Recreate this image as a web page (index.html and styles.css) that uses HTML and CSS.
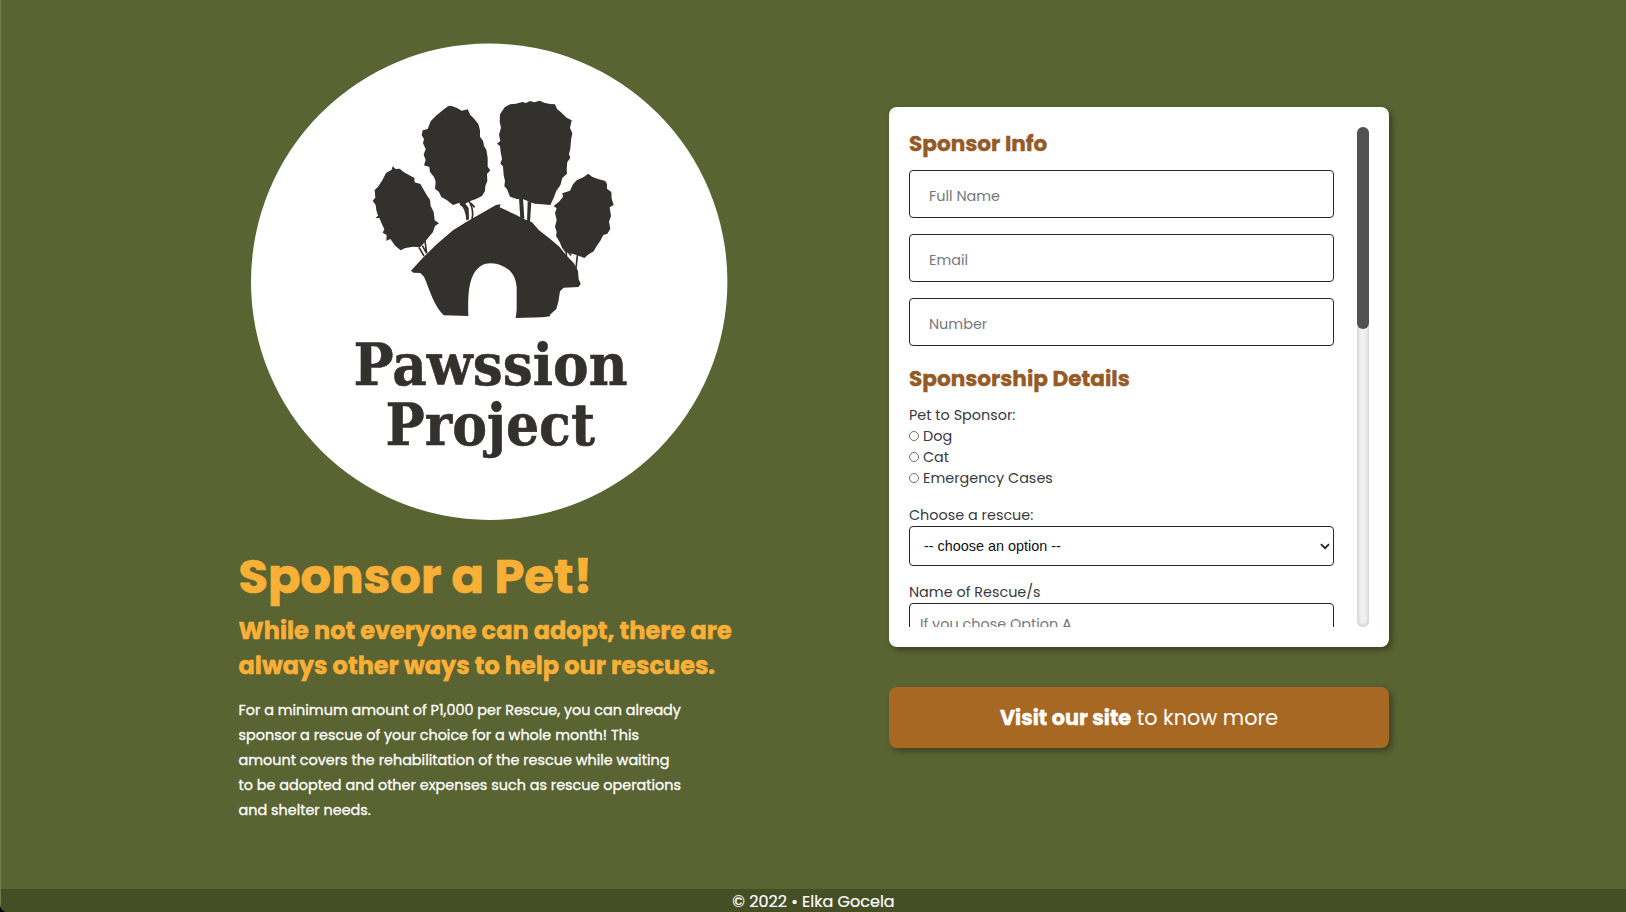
FILE: index.html
```html
<!DOCTYPE html>
<html lang="en">
<head>
<meta charset="utf-8">
<title>Pawssion Project – Sponsor a Pet</title>
<link rel="stylesheet" href="styles.css">
</head>
<body>
<div class="window">
<main class="page">
  <section class="intro">
    <svg class="logo" viewBox="250.5 43 477 477" role="img" aria-label="Pawssion Project">
      <circle cx="488.7" cy="281.7" r="238.2" fill="#fff"/>
      <g transform="translate(349.5 80) scale(.33333)" fill="#33312d" stroke-linejoin="round">
        <path d="M128 259L137 267 149 266 162 277 181 287 193 294 194 307 211 312 220 328 232 348 240 359 242 378 251 396 254 421 267 430 255 438 249 456 237 470 224 487 210 502 190 500 166 504 152 511 136 498 121 477 109 482 110 465 98 458 103 448 96 433 88 414 76 415 84 407 79 391 77 375 68 362 76 353 74 330 84 320 97 301 108 279 125 269Z"/>
        <path d="M303 77L321 84 335 92 353 88 361 105 371 115 385 132 390 151 390 170 399 182 402 197 409 209 413 234 413 260 421 271 411 282 412 303 406 318 405 333 396 348 378 357 361 363 340 374 326 369 309 375 290 360 274 351 267 336 255 326 257 305 252 291 240 276 238 261 222 256 227 240 221 224 227 207 219 190 222 177 215 166 218 151 233 147 242 124 258 107 278 91 294 79Z"/>
        <path d="M464 82L480 73 498 71 517 66 528 69 540 63 553 67 569 62 585 69 601 72 615 73 621 87 632 96 651 114 665 121 660 144 667 160 663 181 661 206 657 223 661 233 652 246 650 266 651 281 637 294 631 316 619 332 611 354 601 375 577 373 554 371 538 365 520 358 500 357 480 350 471 328 463 318 465 303 461 286 459 259 451 251 456 237 452 216 450 198 441 191 451 183 447 164 453 143 449 126 450 103 456 94Z"/>
        <path d="M715 281L726 290 744 297 766 303 771 313 771 326 784 336 785 356 791 375 779 382 783 408 777 425 781 446 772 461 760 465 751 482 740 498 731 514 716 523 703 534 680 525 661 520 646 517 636 503 629 486 618 468 620 456 615 440 620 421 615 398 620 385 611 378 627 365 639 350 637 340 660 332 669 313 680 301 700 292Z"/>
        <path d="M438 375L452 373 449 382 497 404 520 416 546 427 567 451 600 476 628 500 648 525 671 549 684 573 686 598 692 611 686 621 641 623 630 634 625 665 619 687 600 704 600 709 577 712 497 714 500 690 500 621C496 585 483 571 462 560C436 546 406 546 389 560C356 586 353 641 355 708L281 706C250 675 239 628 222 590L211 579 190 578 183 572 220 532 260 493 310 450 355 422 400 397Z"/>
        <path d="M330 371Q348 381 352 420M356 362Q373 389 366 417M362 369L374 382M207 502L222 528M217 497L230 520M225 483L230 520M649 512L649 542M656 518L664 526M683 520L677 571" fill="none" stroke="#33312d" stroke-width="5"/>
        <path d="M330 371L345 370 356 384 357 418 349 420 347 388ZM507 355H519L523 416H511ZM533 364L544 366 540 427H531Z"/>
      </g>
      <g class="logo-text" fill="#33312d">
        <text x="353" y="384.5" textLength="274" lengthAdjust="spacingAndGlyphs">Pawssion</text>
        <text x="385" y="445" textLength="209.5" lengthAdjust="spacingAndGlyphs">Project</text>
      </g>
    </svg>
    <h1 class="title">Sponsor a Pet!</h1>
    <p class="subtitle">While not everyone can adopt, there are<br>always other ways to help our rescues.</p>
    <p class="details">For a minimum amount of P1,000 per Rescue, you can already<br>sponsor a rescue of your choice for a whole month! This<br>amount covers the rehabilitation of the rescue while waiting<br>to be adopted and other expenses such as rescue operations<br>and shelter needs.</p>
  </section>
  <section class="side">
    <div class="card">
      <form class="form">
        <h2 class="heading">Sponsor Info</h2>
        <input class="field" type="text" placeholder="Full Name">
        <input class="field" type="email" placeholder="Email">
        <input class="field" type="text" placeholder="Number">
        <h2 class="heading heading-second">Sponsorship Details</h2>
        <div class="group">
          <div>Pet to Sponsor:</div>
          <label class="option"><span class="radio"></span>Dog</label>
          <label class="option"><span class="radio"></span>Cat</label>
          <label class="option"><span class="radio"></span>Emergency Cases</label>
        </div>
        <div class="group">
          <div>Choose a rescue:</div>
          <div class="select"><span>-- choose an option --</span>
            <svg class="chevron" viewBox="0 0 10 7"><path d="M1 1.2L5 5.2 9 1.2" fill="none" stroke="#222" stroke-width="1.8"/></svg>
          </div>
        </div>
        <div class="group">
          <div>Name of Rescue/s</div>
          <input class="field field-names" type="text" placeholder="If you chose Option A">
        </div>
      </form>
      <div class="track"><div class="thumb"></div></div>
    </div>
    <a class="visit"><span><b>Visit our site</b> to know more</span></a>
  </section>
</main>
<footer class="footer"><span>© 2022 • Elka Gocela</span></footer>
</div>
</body>
</html>
```
FILE: styles.css
```css
* { box-sizing: border-box; }
body {
  margin: 0;
  background: #000;
  color: #39383e;
  font-family: Poppins, Inter, sans-serif;
}
.window {
  height: 912px;
  overflow: hidden;
  display: flex;
  flex-direction: column;
  background: #5a6332;
  border-bottom-left-radius: 8px;
  box-shadow: inset 1px 0 #737b50;
}
h1, h2, p { margin: 0; }
.page {
  flex: 1;
  display: grid;
  grid-template-columns: 650.5px 500px;
  padding-left: 238.5px;
}
.intro { padding-top: 43px; white-space: nowrap; }
.logo { display: block; width: 477px; height: 477px; margin-left: 12px; }
.logo-text { font: bold 57px "DejaVu Serif", serif; stroke: #33312d; stroke-width: .6px; }
.title {
  margin-top: 27px;
  font-size: 48px;
  line-height: 60px;
  font-weight: 700;
  color: #f9b037;
  -webkit-text-stroke: .7px #f9b037;
}
.subtitle {
  margin-top: 6px;
  font-size: 24px;
  line-height: 35px;
  font-weight: 700;
  color: #f9b037;
  -webkit-text-stroke: .5px #f9b037;
}
.details {
  margin-top: 15px;
  font-size: 14.4px;
  line-height: 25px;
  font-weight: 400;
  color: #fff;
  -webkit-text-stroke: .3px #fff;
}
.side { padding-top: 107px; }
.card {
  height: 540px;
  padding: 20px;
  display: flex;
  justify-content: space-between;
  background: #fff;
  border-radius: 8px;
  box-shadow: 3px 3px 6px rgba(0, 0, 0, .35);
}
.form {
  width: 425px;
  height: 500px;
  overflow: hidden;
  font-size: 14.4px;
  line-height: 21px;
}
.heading {
  margin-bottom: 10px;
  font-size: 21.6px;
  line-height: 33px;
  font-weight: 700;
  color: #955a25;
  -webkit-text-stroke: .4px #955a25;
}
.heading-second { margin: 0 0 10px; }
.field {
  display: block;
  width: 425px;
  height: 48px;
  margin: 0 0 16px;
  padding: 4px 19px 0;
  border: 1px solid #25252a;
  border-radius: 4px;
  background: #fff;
  font: 14.4px Poppins, Inter, sans-serif;
}
.field::placeholder { color: #77777c; opacity: 1; }
.field-names { height: 40px; padding: 3px 10px 0; }
.group { margin-bottom: 16px; }
.option { display: flex; align-items: center; }
.radio {
  width: 10px;
  height: 10px;
  margin: -1px 4px 0 0;
  border: 1px solid #707070;
  border-radius: 50%;
}
.select {
  display: flex;
  align-items: center;
  justify-content: space-between;
  height: 40px;
  margin-top: 0;
  padding: 0 3px 0 14px;
  border: 1px solid #25252a;
  border-radius: 4px;
  color: #111;
  font: 14.4px "Liberation Sans", sans-serif;
}
.chevron { width: 10px; height: 7px; }
.track {
  width: 12px;
  height: 500px;
  border-radius: 6px;
  background: #f0f0f0;
  box-shadow: inset 0 0 4px rgba(0, 0, 0, .25);
}
.thumb { height: 202px; border-radius: 6px; background: #525254; }
.visit {
  display: flex;
  align-items: center;
  justify-content: center;
  height: 61px;
  margin-top: 40px;
  border-radius: 8px;
  background: #a76823;
  box-shadow: 3px 3px 6px rgba(0, 0, 0, .35);
  color: #fff;
  font-size: 20.75px;
}
.visit b { -webkit-text-stroke: .4px #fff; }
.footer {
  height: 23px;
  margin-left: 1px;
  background: #454e25;
  color: #fff;
  font-size: 16px;
  line-height: 25px;
  text-align: center;
  -webkit-text-stroke: .2px #fff;
}
```
